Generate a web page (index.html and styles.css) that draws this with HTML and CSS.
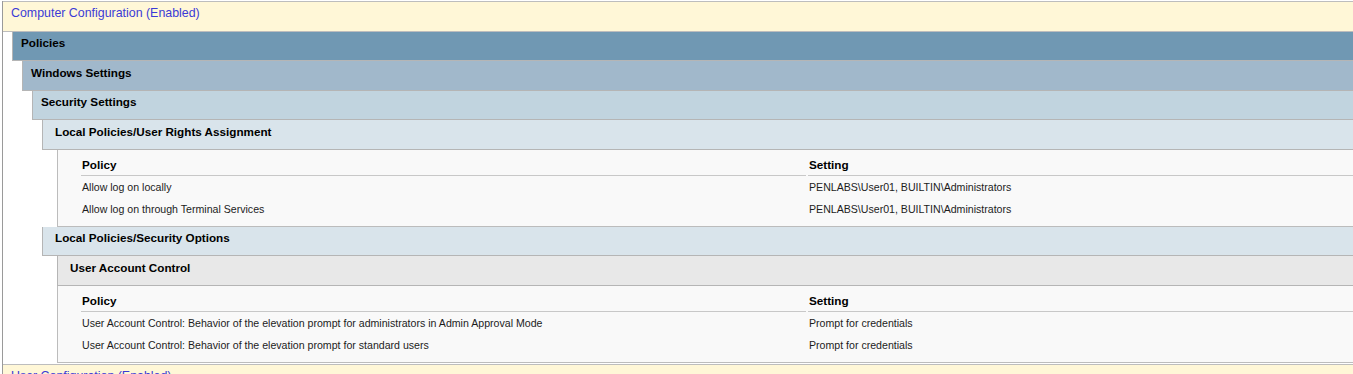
FILE: index.html
```html
<!DOCTYPE html>
<html>
<head>
<meta charset="utf-8">
<link rel="stylesheet" href="styles.css">
</head>
<body>
<div class="report">
  <div class="gpo">
    <div class="gpo-head">Computer Configuration (Enabled)</div>
    <div class="sec lvl1">
      <div class="head h1">Policies</div>
      <div class="sec lvl">
        <div class="head h2">Windows Settings</div>
        <div class="sec lvl">
          <div class="head h3">Security Settings</div>
          <div class="sec lvl">
            <div class="head h4 tall">Local Policies/User Rights Assignment</div>
            <div class="tbl ind">
              <div class="grid">
                <div class="th">Policy</div>
                <div class="th">Setting</div>
                <div class="td">Allow log on locally</div>
                <div class="td">PENLABS\User01, BUILTIN\Administrators</div>
                <div class="td">Allow log on through Terminal Services</div>
                <div class="td">PENLABS\User01, BUILTIN\Administrators</div>
              </div>
            </div>
          </div>
          <div class="sec lvl">
            <div class="head h4 short">Local Policies/Security Options</div>
            <div class="sec ind">
              <div class="head h5">User Account Control</div>
              <div class="tbl">
                <div class="grid">
                  <div class="th">Policy</div>
                  <div class="th">Setting</div>
                  <div class="td">User Account Control: Behavior of the elevation prompt for administrators in Admin Approval Mode</div>
                  <div class="td">Prompt for credentials</div>
                  <div class="td">User Account Control: Behavior of the elevation prompt for standard users</div>
                  <div class="td">Prompt for credentials</div>
                </div>
              </div>
            </div>
          </div>
        </div>
      </div>
    </div>
  </div>
  <div class="gpo">
    <div class="gpo-head">User Configuration (Enabled)</div>
  </div>
</div>
</body>
</html>
```

FILE: styles.css
```css
html, body {
  margin: 0;
  padding: 0;
  background: #ffffff;
  overflow: hidden;
}
body {
  padding: 1px 0 0 2px;
  font-family: "Liberation Sans", Arial, sans-serif;
  font-size: 10.6px;
  color: #000;
}
.report {
  border-left: 1px solid #9a9a9a;
}
.gpo {
  border-top: 1px solid #bdbdbd;
}
.gpo + .gpo {
  margin-top: 1px;
}
.gpo-head {
  background: #fff7d7;
  color: #3b3bd6;
  font-size: 12.4px;
  height: 29px;
  line-height: 23px;
  padding-left: 8px;
  border-bottom: 1px solid #bdbdbd;
  white-space: nowrap;
}
.lvl1 { margin-left: 9px; }
.lvl { margin-left: 10px; }
.ind { margin-left: 15px; }
.head {
  font-weight: bold;
  font-size: 11.7px;
  border-left: 1px solid #b5b5b5;
  border-bottom: 1px solid #b5b5b5;
  white-space: nowrap;
}
.h1 { background: #7098b3; height: 28px; line-height: 22px; padding-left: 8px; }
.h2 { background: #a1b8cb; height: 29px; line-height: 23px; padding-left: 8px; }
.h3 { background: #c1d4df; height: 28px; line-height: 22px; padding-left: 8px; }
.h4 { background: #d9e4eb; padding-left: 12px; }
.h4.tall { height: 29px; line-height: 23px; }
.h4.short { height: 28px; line-height: 22px; }
.h5 { background: #e8e8e8; height: 29px; line-height: 23px; padding-left: 12px; }
.tbl {
  background: #f9f9f9;
  border-left: 1px solid #bcbcbc;
  border-bottom: 1px solid #bcbcbc;
  padding: 6px 0 6px 23px;
  height: 64px;
}
.grid {
  display: grid;
  grid-template-columns: 725px 1fr;
  column-gap: 2px;
}
.th {
  font-weight: bold;
  font-size: 11.7px;
  height: 19px;
  line-height: 17px;
  padding-left: 1px;
  border-bottom: 1px solid #c8c8c8;
  white-space: nowrap;
}
.td {
  height: 22px;
  line-height: 22px;
  padding-left: 1px;
  color: #1c1c1c;
  white-space: nowrap;
}
```
